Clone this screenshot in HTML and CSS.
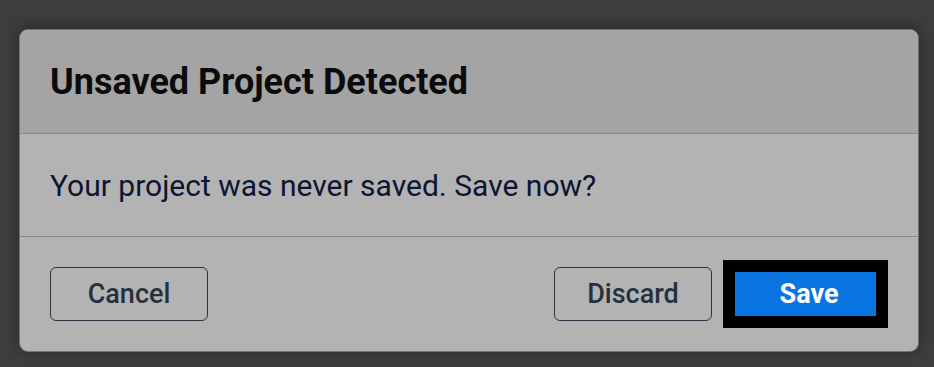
FILE: index.html
```html
<!DOCTYPE html>
<html lang="en">
<head>
  <meta charset="UTF-8" />
  <title>Unsaved Project</title>
  <link rel="stylesheet" href="styles.css">
</head>
<body>
  <div class="dialog">
    <div class="dialog-header">
      <h2>Unsaved Project Detected</h2>
    </div>
    <div class="dialog-body">
      <p>Your project was never saved. Save now?</p>
    </div>
    <div class="dialog-footer">
      <button class="btn">Cancel</button>
      <div class="spacer"></div>
      <button class="btn">Discard</button>
      <button class="btn primary">Save</button>
    </div>
  </div>
</body>
</html>
```

FILE: styles.css
```css
body {
  margin: 0;
  padding: 29px 15px 0 19px;
  background: #3d3d3d;
  font-family: Roboto, "Liberation Sans", sans-serif;
  height: 367px;
  box-sizing: border-box;
  overflow: hidden;
}

.dialog {
  width: 900px;
  box-sizing: border-box;
  border: 1px solid #6f717d;
  border-radius: 9px;
  overflow: hidden;
  background: #b3b3b3;
  box-shadow: 0 -2px 14px rgba(0, 0, 0, 0.35);
}

.dialog-header {
  background: #a4a4a4;
  height: 103px;
  border-bottom: 1px solid #858893;
  display: flex;
  align-items: center;
  padding: 0 30px;
}

h2 {
  margin: 0;
  font-size: 36px;
  font-weight: 700;
  color: #0b0b0d;
}

.dialog-body {
  height: 102px;
  border-bottom: 1px solid #858893;
  display: flex;
  align-items: center;
  padding: 0 30px;
}

.dialog-body p {
  margin: 0;
  font-size: 30px;
  color: #0d1530;
}

.dialog-footer {
  height: 114px;
  display: flex;
  align-items: center;
  padding: 0 30px;
  gap: 11px;
}

.spacer {
  flex: 1;
}

.btn {
  width: 158px;
  height: 54px;
  background: transparent;
  border: 1px solid #2b3440;
  border-radius: 6px;
  font-family: Roboto, "Liberation Sans", sans-serif;
  font-size: 27px;
  font-weight: 500;
  color: #27313d;
  cursor: pointer;
}

.btn.primary {
  width: 165px;
  height: 68px;
  padding: 0 0 0 7px;
  border: 12px solid #000;
  border-radius: 0;
  background: #0a74e0;
  color: #fff;
  font-weight: 700;
}
```
